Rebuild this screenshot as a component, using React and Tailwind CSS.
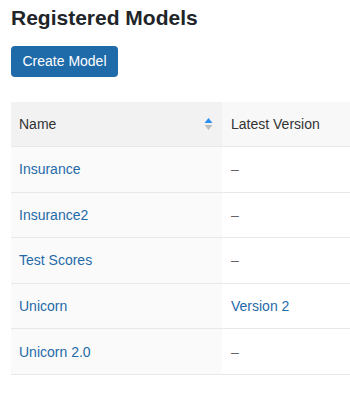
export default function App() {
  const rows = [
    ["Insurance", null],
    ["Insurance2", null],
    ["Test Scores", null],
    ["Unicorn", "Version 2"],
    ["Unicorn 2.0", null],
  ];
  return (
    <div className="w-[350px] h-[395px] overflow-hidden bg-white font-['Liberation_Sans',sans-serif] text-[#1a1a1a]">
      <div className="pl-[11px] pt-[4px]">
        <h1 className="text-[21px] leading-[27px] font-bold text-[#212529]">Registered Models</h1>
        <button className="mt-[15px] h-[31px] w-[107px] rounded-[4px] bg-[#1f6aa9] text-white text-[14px]">Create Model</button>
        <div className="mt-[25px] w-[400px] text-[14px]">
          <div className="flex h-[45px] border-b border-[#e8e8e8]">
            <div className="w-[211px] bg-[#f2f2f2] flex items-center pl-[8px] pr-[9px] justify-between text-[#333]">
              <span>Name</span>
              <svg width="9" height="12" viewBox="0 0 9 12">
                <path d="M4.5 0 L8.5 5 L0.5 5 Z" fill="#2d8ff0" />
                <path d="M0.5 7 L8.5 7 L4.5 12 Z" fill="#bdbdbd" />
              </svg>
            </div>
            <div className="flex-1 bg-[#f8f8f8] flex items-center pl-[9px] text-[#333]">Latest Version</div>
          </div>
          {rows.map(([n, v]) => (
            <div key={n} className="flex h-[45.6px] border-b border-[#e8e8e8]">
              <div className="w-[211px] bg-[#fafafa] flex items-center pl-[8px] pt-[1px] text-[#1f6aa9]">{n}</div>
              <div className="flex-1 bg-white flex items-center pl-[9px] pt-[1px]">
                {v ? <span className="text-[#1f6aa9]">{v}</span> : <span className="text-[#666]">–</span>}
              </div>
            </div>
          ))}
        </div>
      </div>
    </div>
  );
}
